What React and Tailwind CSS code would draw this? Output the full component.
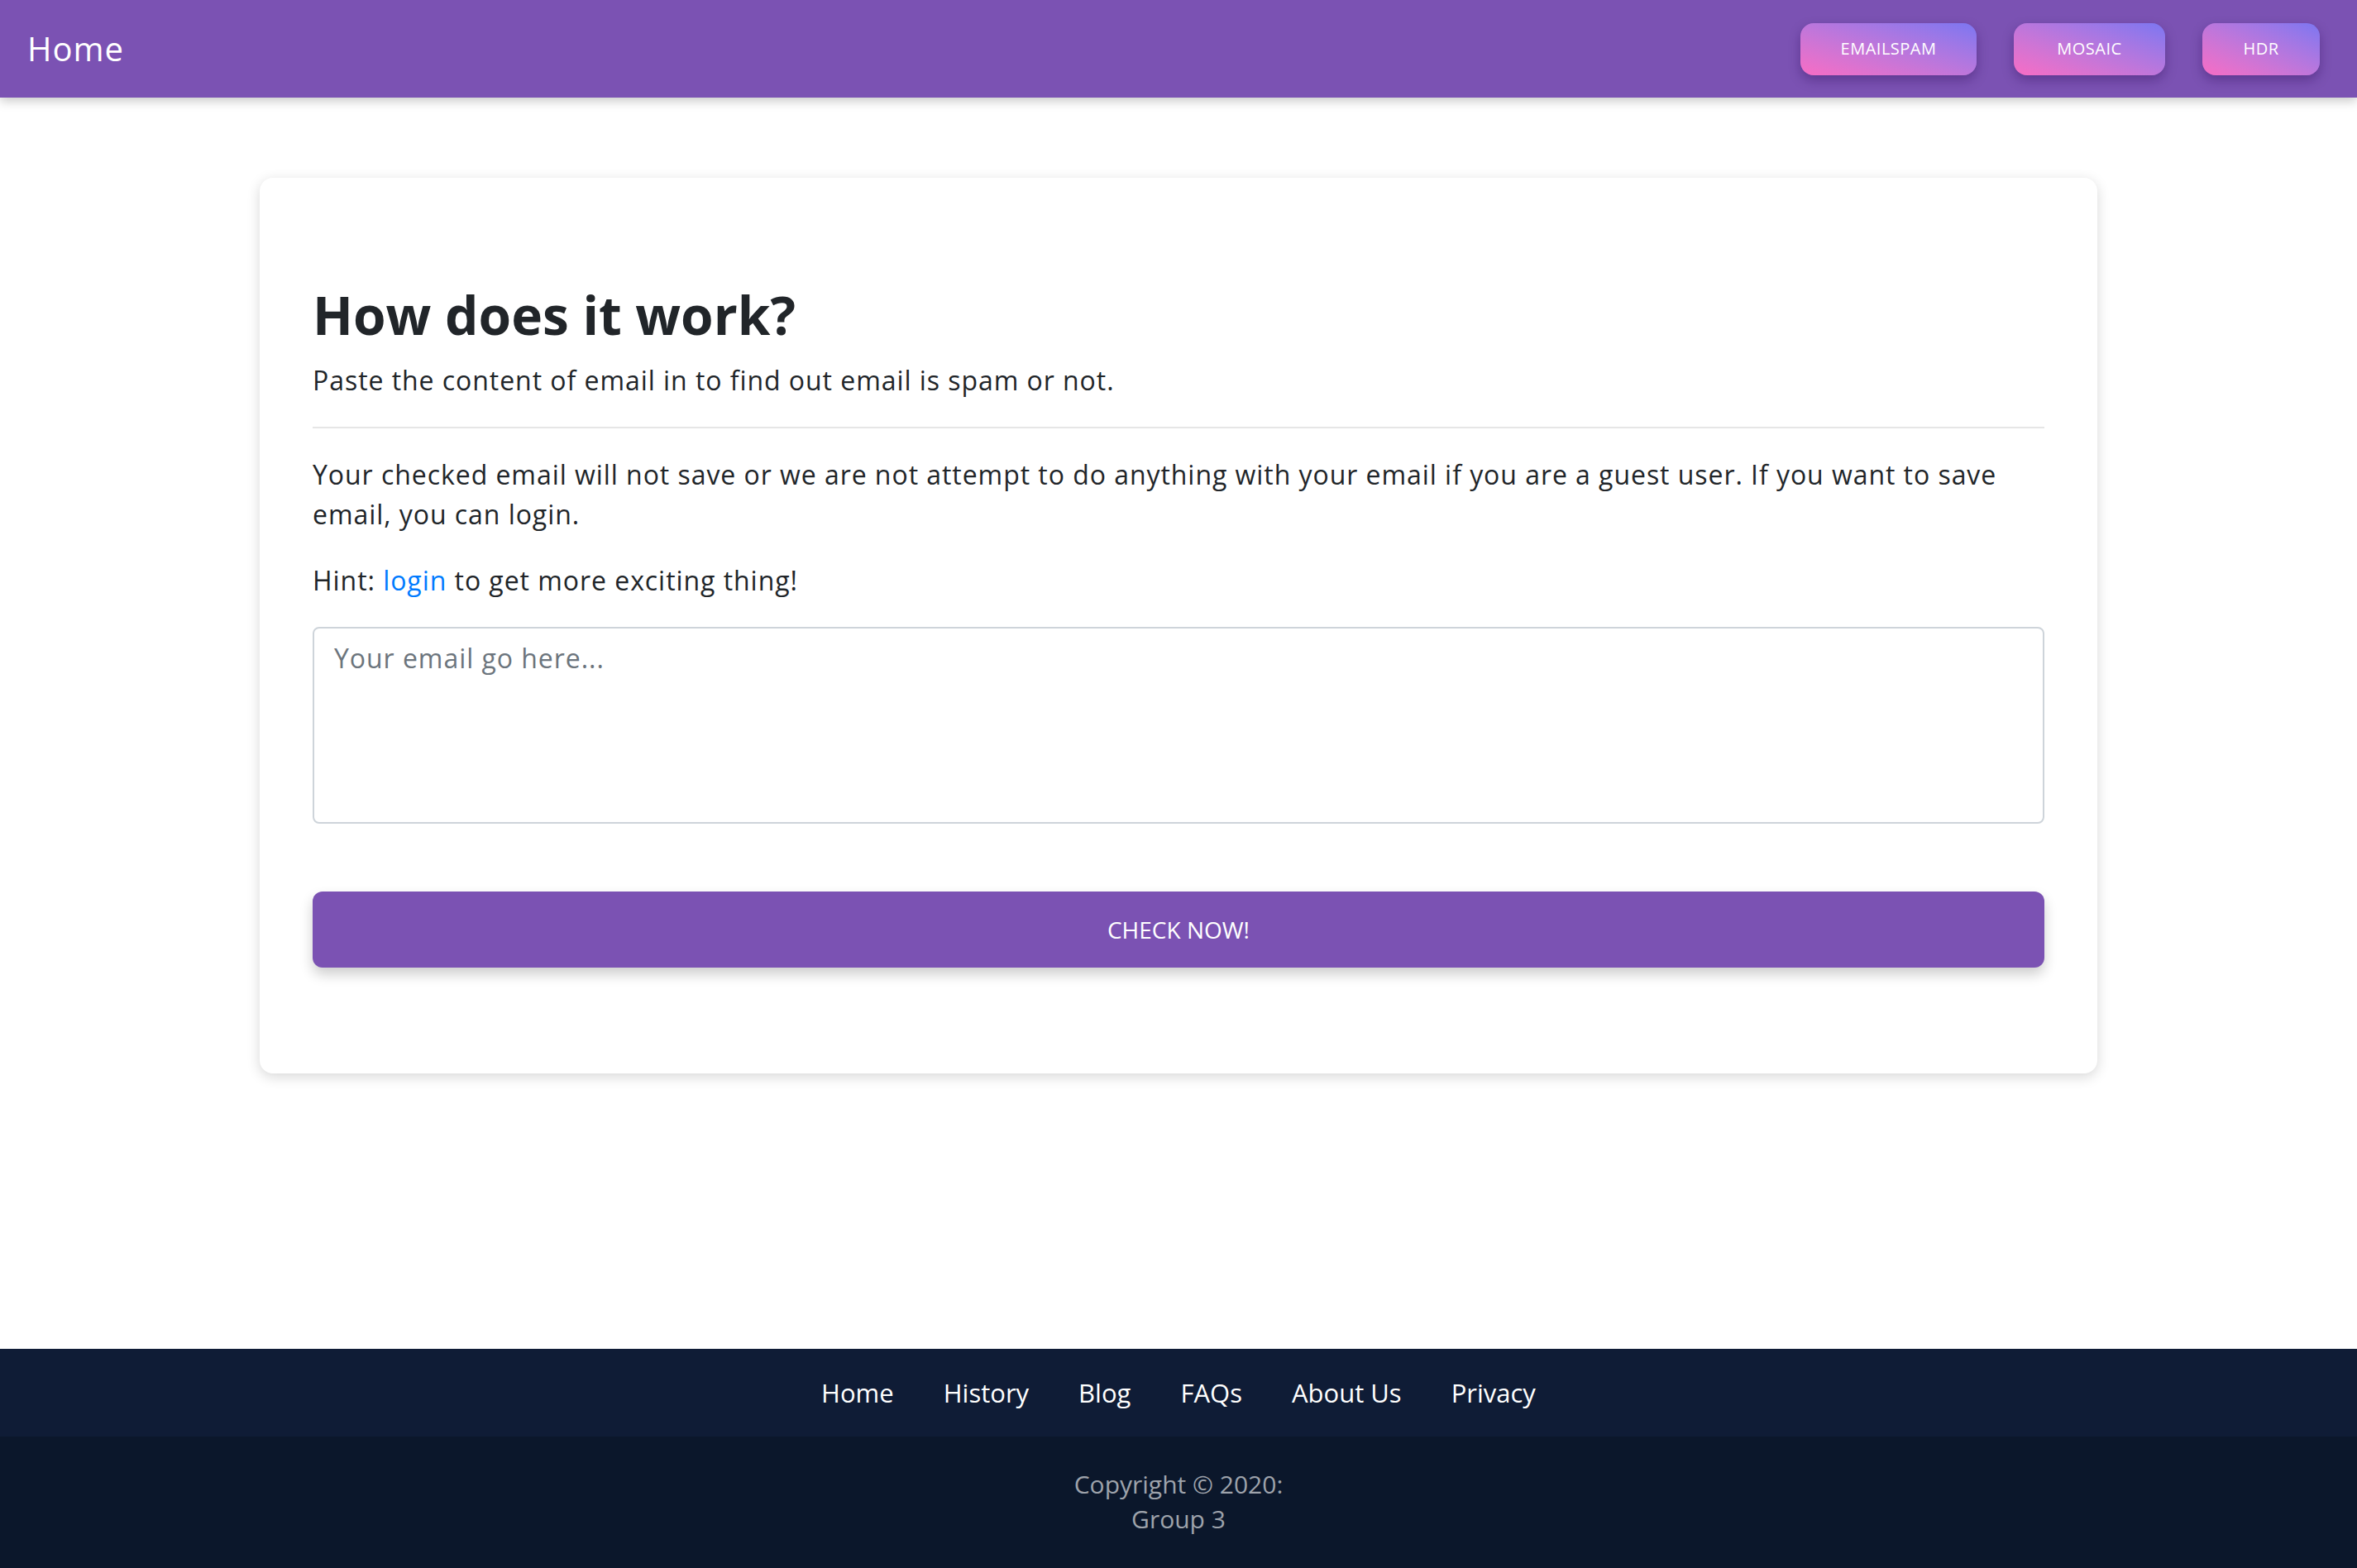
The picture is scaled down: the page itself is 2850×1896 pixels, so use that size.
import React from "react";

const font = { fontFamily: '"Open Sans", "Liberation Sans", sans-serif' };

function NavBtn({ children, w }) {
  return (
    <button
      className={`h-[63px] rounded-[16px] bg-linear-to-tr from-[#f86cc4] to-[#7b76f1] text-white text-[20px] font-medium tracking-[0.5px] shadow-[0_6px_14px_rgba(40,10,80,0.35)] ${w}`}
    >
      {children}
    </button>
  );
}

export default function App() {
  return (
    <div className="min-h-screen flex flex-col bg-white text-[#212529]" style={font}>
      <header className="h-[118px] bg-[#7b52b3] flex items-center justify-between pl-[33px] pr-[45px] shadow-[0_4px_12px_rgba(0,0,0,0.22)] relative z-10">
        <div className="text-white text-[40px] leading-none tracking-[1px]">Home</div>
        <nav className="flex items-center gap-[45px]">
          <NavBtn w="w-[213px]">EMAILSPAM</NavBtn>
          <NavBtn w="w-[183px]">MOSAIC</NavBtn>
          <NavBtn w="w-[142px]">HDR</NavBtn>
        </nav>
      </header>

      <main className="flex-1 flex justify-center pt-[97px]">
        <div className="w-[2222px] h-fit rounded-[16px] bg-white shadow-[0_4px_16px_rgba(0,0,0,0.16)] px-[64px] pt-[128px] pb-[128px]">
          <h2 className="text-[64px] font-bold leading-[1.2] tracking-[0px] mb-[16px]">How does it work?</h2>
          <p className="text-[32px] leading-[48px] tracking-[0.95px] mb-[32px]">
            Paste the content of email in to find out email is spam or not.
          </p>
          <hr className="border-0 border-t-2 border-[#e6e6e6] my-[32px]" />
          <p className="text-[32px] leading-[48px] tracking-[0.95px] mb-[32px]">
            Your checked email will not save or we are not attempt to do anything with your email if you are a guest
            user. If you want to save email, you can login.
          </p>
          <p className="text-[32px] leading-[48px] tracking-[0.95px] mb-[32px]">
            Hint: <a className="text-[#007bff]">login</a> to get more exciting thing!
          </p>
          <textarea
            className="block w-full h-[238px] border-2 border-[#ced4da] rounded-[8px] px-[24px] py-[12px] text-[32px] leading-[48px] tracking-[0.95px] placeholder:text-[#6c757d] resize-none outline-none"
            placeholder="Your email go here..."
            style={font}
          />
          <button className="mt-[82px] w-full h-[92px] rounded-[12px] bg-[#7b52b3] text-white text-[28px] shadow-[0_8px_16px_rgba(0,0,0,0.2)]">
            CHECK NOW!
          </button>
        </div>
      </main>

      <footer>
        <div className="h-[106px] bg-[#0f1c36] flex items-center justify-center gap-[60px] text-white text-[31px]">
          <span>Home</span>
          <span>History</span>
          <span>Blog</span>
          <span>FAQs</span>
          <span>About Us</span>
          <span>Privacy</span>
        </div>
        <div className="h-[159px] bg-[#0b172b] flex flex-col items-center justify-center text-[#9ea3ab] text-[30px] leading-[42px] pb-[2px]">
          <div>Copyright © 2020:</div>
          <div>Group 3</div>
        </div>
      </footer>
    </div>
  );
}
